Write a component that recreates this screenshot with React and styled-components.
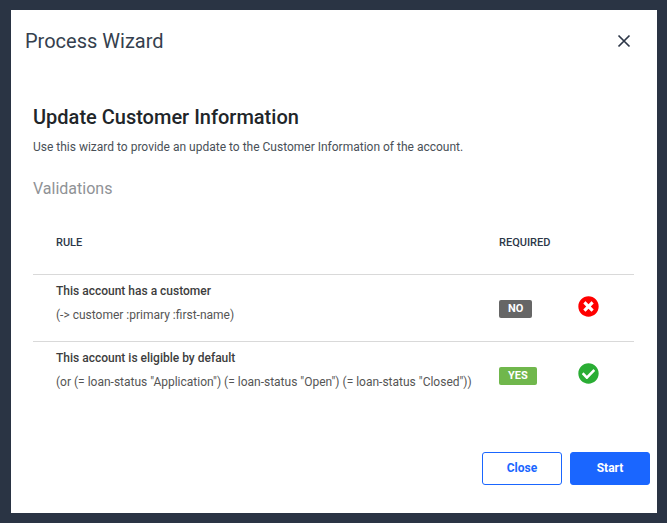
import React from 'react'
import styled, { createGlobalStyle } from 'styled-components'
import { FaTimesCircle, FaCheckCircle } from 'react-icons/fa'

const rules = [
  {
    title: 'This account has a customer',
    code: '(-> customer :primary :first-name)',
    required: false,
    passed: false
  },
  {
    title: 'This account is eligible by default',
    code: '(or (= loan-status "Application") (= loan-status "Open") (= loan-status "Closed"))',
    required: true,
    passed: true
  }
]

const App = () => (
  <>
    <GlobalStyle />
    <Backdrop>
      <Modal>
        <Header>
          <ModalTitle>Process Wizard</ModalTitle>
          <CloseIcon aria-label="Close">
            <svg width="14" height="14" viewBox="0 0 14 14" fill="none">
              <path d="M1.5 1.5L12.5 12.5M12.5 1.5L1.5 12.5" stroke="#2d3748" strokeWidth="1.7" />
            </svg>
          </CloseIcon>
        </Header>

        <Body>
          <Heading>Update Customer Information</Heading>
          <Description>
            Use this wizard to provide an update to the Customer Information of the account.
          </Description>
          <SectionTitle>Validations</SectionTitle>

          <Table>
            <thead>
              <tr>
                <HeadCell>Rule</HeadCell>
                <HeadCell>Required</HeadCell>
                <HeadCell />
              </tr>
            </thead>
            <tbody>
              {rules.map(rule => (
                <tr key={rule.title}>
                  <RuleCell>
                    <RuleTitle>{rule.title}</RuleTitle>
                    <RuleCode>{rule.code}</RuleCode>
                  </RuleCell>
                  <Cell>
                    <Badge $yes={rule.required}>{rule.required ? 'YES' : 'NO'}</Badge>
                  </Cell>
                  <IconCell $passed={rule.passed}>
                    {rule.passed ? <FaCheckCircle /> : <FaTimesCircle />}
                  </IconCell>
                </tr>
              ))}
            </tbody>
          </Table>
        </Body>

        <Footer>
          <OutlineButton>Close</OutlineButton>
          <PrimaryButton>Start</PrimaryButton>
        </Footer>
      </Modal>
    </Backdrop>
  </>
)

export default App

const GlobalStyle = createGlobalStyle`
  html, body {
    margin: 0;
    padding: 0;
    background: #2a3444;
  }
  * {
    box-sizing: border-box;
  }
`

const Backdrop = styled.div`
  width: 667px;
  height: 523px;
  padding: 10px 10px 10px 11px;
  background: #2a3444;
  font-family: Roboto, "Liberation Sans", sans-serif;
`

const Modal = styled.div`
  width: 646px;
  height: 503px;
  background: #fff;
  display: flex;
  flex-direction: column;
`

const Header = styled.div`
  display: flex;
  align-items: center;
  justify-content: space-between;
  height: 62px;
  padding: 0 26px 0 14px;
`

const ModalTitle = styled.h2`
  margin: 0;
  font-size: 20px;
  font-weight: 400;
  color: #353f4e;
`

const CloseIcon = styled.div`
  display: flex;
  width: 14px;
  height: 14px;
`

const Body = styled.div`
  flex: 1;
  padding: 31px 23px 0 22px;
`

const Heading = styled.h3`
  margin: 0;
  font-size: 20px;
  line-height: 28px;
  font-weight: 500;
  color: #212529;
`

const Description = styled.p`
  margin: 8px 0 0;
  font-size: 12px;
  line-height: 16px;
  color: #495057;
`

const SectionTitle = styled.h4`
  margin: 24px 0 0;
  font-size: 16px;
  line-height: 20px;
  font-weight: 400;
  color: #8f9296;
`

const Table = styled.table`
  width: 601px;
  margin-top: 11px;
  border-collapse: collapse;
  table-layout: fixed;
`

const HeadCell = styled.th`
  height: 64px;
  padding: 2px 0 0 23px;
  font-size: 11px;
  font-weight: 500;
  text-align: left;
  text-transform: uppercase;
  color: #2d3748;

  &:first-child {
    width: 443px;
  }
  &:nth-child(2) {
    width: 91px;
  }
`

const Cell = styled.td`
  height: 67px;
  padding: 0 0 0 23px;
  border-top: 1px solid #d9d9d9;
  vertical-align: middle;
`

const RuleCell = styled(Cell)`
  padding-top: 8px;
  vertical-align: top;
`

const IconCell = styled(Cell)`
  padding: 0 0 3px 11px;
  font-size: 21px;
  line-height: 0;
  color: ${props => (props.$passed ? '#2aad34' : '#ff0000')};
`

const RuleTitle = styled.div`
  font-size: 12px;
  line-height: 16px;
  font-weight: 500;
  color: #3d3d3d;
`

const RuleCode = styled.div`
  margin-top: 8px;
  font-size: 12px;
  line-height: 16px;
  white-space: nowrap;
  color: #555;
`

const Badge = styled.span`
  display: inline-block;
  height: 18px;
  padding: 0 9px;
  border-radius: 2px;
  font-size: 11px;
  line-height: 18px;
  font-weight: 700;
  color: #fff;
  background: ${props => (props.$yes ? '#70b74c' : '#666')};
`

const Footer = styled.div`
  display: flex;
  justify-content: flex-end;
  gap: 8px;
  padding: 0 7px 28px 0;
`

const OutlineButton = styled.button`
  width: 80px;
  height: 33px;
  padding: 0 0 1px;
  border: 1px solid #1a66ff;
  border-radius: 3px;
  background: #fff;
  color: #1a66ff;
  font-family: inherit;
  font-size: 12px;
  font-weight: 700;
`

const PrimaryButton = styled(OutlineButton)`
  background: #1a66ff;
  color: #fff;
`
